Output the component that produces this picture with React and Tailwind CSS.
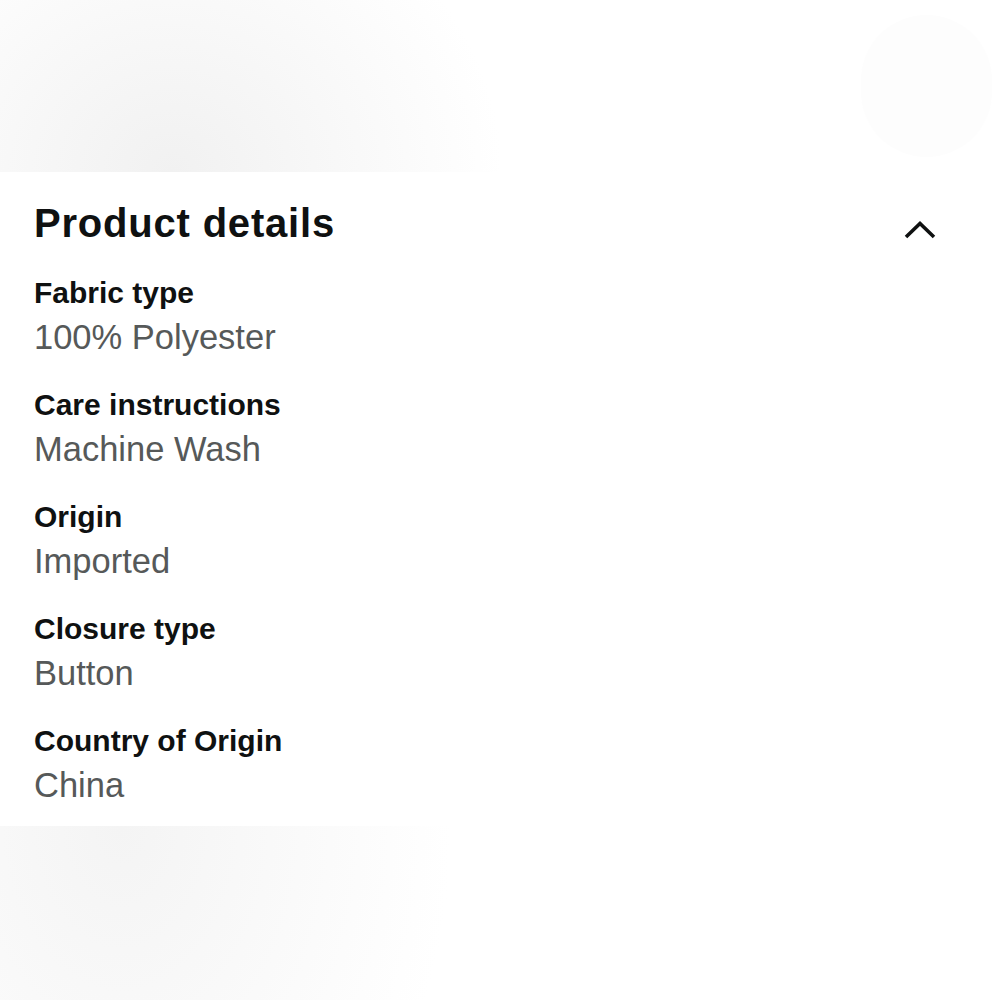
import React from "react";

const items = [
  ["Fabric type", "100% Polyester"],
  ["Care instructions", "Machine Wash"],
  ["Origin", "Imported"],
  ["Closure type", "Button"],
  ["Country of Origin", "China"],
];

export default function App() {
  return (
    <div className="w-[1000px] h-[1000px] bg-white overflow-hidden flex flex-col" style={{ fontFamily: '"Liberation Sans", Arial, sans-serif' }}>
      <div className="relative h-[172px] shrink-0 bg-[radial-gradient(330px_300px_at_172px_172px,#f1f1f1,#ffffff)]">
        <div className="absolute left-[861px] top-[15px] w-[131px] h-[142px] rounded-full bg-[#fdfdfd]" />
      </div>
      <div className="bg-white h-[654px] shrink-0 pt-[27px] pl-[34px] pr-[64px]">
        <div className="flex items-center justify-between">
          <h2 className="text-[40px] leading-[48px] font-bold tracking-[0.8px] text-[#0f1111]">Product details</h2>
          <svg width="32" height="20" viewBox="0 0 32 20" className="mt-[14px]" fill="none" stroke="#0f1111" strokeWidth="3.6" strokeLinecap="butt" strokeLinejoin="miter">
            <polyline points="2,17 16,3.5 30,17" />
          </svg>
        </div>
        <div className="mt-[28px] flex flex-col gap-[27px]">
          {items.map(([k, v]) => (
            <div key={k} className="flex flex-col">
              <div className="text-[30px] leading-[36px] font-bold text-[#0f1111]">{k}</div>
              <div className="pt-[3px] text-[34.5px] leading-[46px] text-[#565959]">{v}</div>
            </div>
          ))}
        </div>
      </div>
      <div className="flex-1 bg-[radial-gradient(330px_460px_at_121px_0px,#f4f4f4,#ffffff)]" />
    </div>
  );
}
